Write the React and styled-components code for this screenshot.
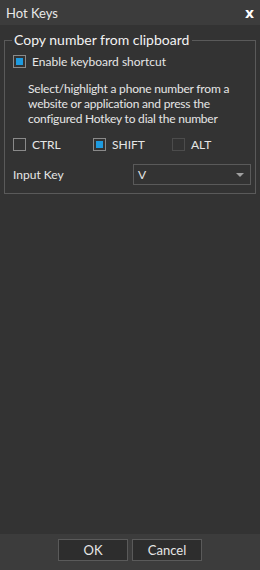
import React from "react";
import styled, { createGlobalStyle } from "styled-components";

const GlobalStyle = createGlobalStyle`
  html, body {
    margin: 0;
    padding: 0;
    background: #333333;
  }
  body {
    font-family: Lato, "Open Sans", sans-serif;
    color: #e6e6e6;
  }
`;

const Window = styled.div`
  width: 260px;
  height: 570px;
  display: flex;
  flex-direction: column;
  background: #333333;
  overflow: hidden;
`;

const TitleBar = styled.div`
  height: 25px;
  flex-shrink: 0;
  display: flex;
  align-items: center;
  justify-content: space-between;
  padding: 0 6px 0 6px;
  background: #3c3c3c;
  font-size: 13px;
  color: #e8e8e8;
`;

const CloseButton = styled.span`
  font-family: "DejaVu Sans", sans-serif;
  font-weight: bold;
  font-size: 14px;
  color: #ffffff;
  cursor: pointer;
`;

const Body = styled.div`
  flex: 1;
  padding: 6px 4px 0 4px;
`;

const Group = styled.fieldset`
  margin: 0;
  padding: 5px 4px 8px 8px;
  border: 1px solid #5a5a5a;
  border-radius: 0;

  legend {
    padding: 0 3px 0 2px;
    margin-left: -1px;
    font-size: 14px;
    color: #f2f2f2;
    line-height: 18px;
  }
`;

const CheckRow = styled.label`
  display: flex;
  align-items: center;
  gap: 6px;
  font-size: 12px;
  color: #e6e6e6;
  width: ${(p) => p.$width || "auto"};
`;

const Box = styled.span`
  width: 11px;
  height: 11px;
  flex-shrink: 0;
  border: 1px solid ${(p) => (p.$disabled ? "#4c4c4c" : "#8a8a8a")};
  display: flex;
  align-items: center;
  justify-content: center;

  &::after {
    content: "";
    display: ${(p) => (p.$checked ? "block" : "none")};
    width: 7px;
    height: 7px;
    background: #1e9be0;
  }
`;

const Description = styled.p`
  margin: 12px 0 0 15px;
  font-size: 12px;
  letter-spacing: -0.2px;
  line-height: 15px;
  color: #e6e6e6;
`;

const Modifiers = styled.div`
  display: flex;
  margin-top: 11px;
`;

const InputRow = styled.div`
  display: flex;
  align-items: center;
  margin-top: 12px;
`;

const Label = styled.span`
  width: 120px;
  font-size: 12px;
  color: #e6e6e6;
`;

const Select = styled.div`
  flex: 1;
  height: 19px;
  border: 1px solid #5a5a5a;
  display: flex;
  align-items: center;
  justify-content: space-between;
  padding: 0 6px 0 4px;
  font-size: 12px;
  color: #e6e6e6;
`;

const Caret = styled.span`
  width: 0;
  height: 0;
  border-left: 4px solid transparent;
  border-right: 4px solid transparent;
  border-top: 4px solid #a0a0a0;
`;

const Footer = styled.div`
  height: 31px;
  flex-shrink: 0;
  background: #3c3c3c;
  display: flex;
  justify-content: center;
  align-items: flex-start;
  padding-top: 5px;
  gap: 4px;
`;

const Button = styled.button`
  width: 70px;
  height: 22px;
  background: #2d2d2d;
  border: 1px solid #5a5a5a;
  color: #e6e6e6;
  font-family: Lato, "Open Sans", sans-serif;
  font-size: 13px;
  padding: 0;
  cursor: pointer;
`;

export default function App() {
  return (
    <>
      <GlobalStyle />
      <Window>
        <TitleBar>
          <span>Hot Keys</span>
          <CloseButton>x</CloseButton>
        </TitleBar>
        <Body>
          <Group>
            <legend>Copy number from clipboard</legend>
            <CheckRow>
              <Box $checked />
              Enable keyboard shortcut
            </CheckRow>
            <Description>
              Select/highlight a phone number from a website or application and
              press the configured Hotkey to dial the number
            </Description>
            <Modifiers>
              <CheckRow $width="80px">
                <Box />
                CTRL
              </CheckRow>
              <CheckRow $width="79px">
                <Box $checked />
                SHIFT
              </CheckRow>
              <CheckRow>
                <Box $disabled />
                ALT
              </CheckRow>
            </Modifiers>
            <InputRow>
              <Label>Input Key</Label>
              <Select>
                <span>V</span>
                <Caret />
              </Select>
            </InputRow>
          </Group>
        </Body>
        <Footer>
          <Button>OK</Button>
          <Button>Cancel</Button>
        </Footer>
      </Window>
    </>
  );
}
